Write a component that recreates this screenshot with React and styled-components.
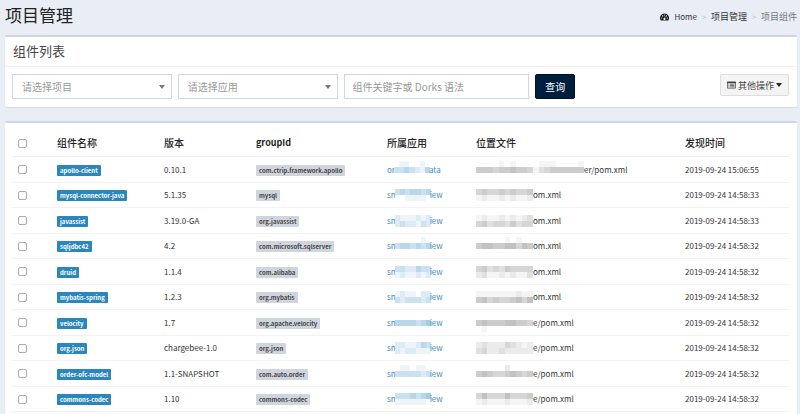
import React from "react";
import styled, { createGlobalStyle } from "styled-components";

const GlobalStyle = createGlobalStyle`
  * { box-sizing: border-box; }
  body {
    margin: 0;
    background: #e9eef6;
    color: #333;
    font-family: "Noto Sans CJK SC", "Noto Sans", sans-serif;
    font-size: 8px;
    line-height: 12px;
    overflow: hidden;
  }
  button, input, select { font-family: inherit; margin: 0; }
`;

const Page = styled.main`
  display: flex;
  flex-direction: column;
  padding: 0 3px 0 5px;
`;

const PageHeader = styled.header`
  display: flex;
  align-items: center;
  justify-content: space-between;
  height: 35px;
  padding-bottom: 6px;
`;

const PageTitle = styled.h1`
  margin: 0;
  font-size: 17px;
  line-height: 24px;
  font-weight: 400;
  color: #222;
`;

const Breadcrumb = styled.nav`
  display: flex;
  align-items: center;
  margin-top: 4px;
  font-size: 9px;
`;

const Crumb = styled.a`
  display: flex;
  align-items: center;
  gap: 5px;
  color: #333;
  text-decoration: none;
`;

const Latin = styled.span`
  font-size: 8px;
`;

const Separator = styled.span`
  width: 14px;
  text-align: center;
  font-size: 8px;
  color: #bcc1c9;
`;

const CurrentCrumb = styled.span`
  color: #777;
`;

const Card = styled.section`
  background: #fff;
  border-top: 2px solid #d0d4de;
  border-radius: 2px;
  box-shadow: 0 1px 1px rgba(0, 0, 0, 0.08);
  margin-bottom: 14px;
`;

const CardHeader = styled.div`
  height: 30px;
  padding: 5px 8px;
  border-bottom: 1px solid #f0f0f0;
`;

const CardTitle = styled.h2`
  margin: 0;
  font-size: 13px;
  line-height: 17px;
  font-weight: 400;
  color: #444;
`;

const Filters = styled.form`
  display: grid;
  grid-template-columns: 160fr 160fr 186fr auto 208fr;
  column-gap: 6px;
  align-items: start;
  padding: 7px 8px 8px 7px;
`;

const SelectWrap = styled.div`
  display: grid;
  align-items: center;
  > * { grid-area: 1 / 1; }
  > svg { justify-self: end; margin-right: 7px; pointer-events: none; }
`;

const Select = styled.select`
  appearance: none;
  width: 100%;
  height: 25px;
  padding: 0 18px 0 9px;
  border: 1px solid #d0d6e2;
  border-radius: 0;
  background: #fff;
  color: #999;
  font-size: 10px;
`;

const TextInput = styled.input`
  width: 100%;
  min-width: 0;
  height: 25px;
  padding: 0 8px;
  border: 1px solid #d0d6e2;
  border-radius: 0;
  background: #fff;
  color: #444;
  font-size: 10px;
  &::placeholder { color: #999; opacity: 1; }
`;

const SearchButton = styled.button`
  height: 25px;
  padding: 0 9px;
  border: 1px solid #00112e;
  border-radius: 2px;
  background: #001f3f;
  color: #fff;
  font-size: 10px;
`;

const MoreButton = styled.button`
  display: flex;
  align-items: center;
  justify-self: end;
  gap: 2px;
  height: 22px;
  padding: 0 6px;
  border: 1px solid #ddd;
  border-radius: 2px;
  background: #f4f4f4;
  color: #444;
  font-size: 9px;
`;

const TableArea = styled.div`
  padding: 7px 8px 7px 7px;
`;

const Table = styled.table`
  width: 100%;
  table-layout: fixed;
  border-collapse: separate;
  border-spacing: 0;
`;

const Column = styled.col`
  width: ${(p) => p.$width}px;
`;

const HeadCell = styled.th`
  height: 27px;
  padding: 0 6px;
  border-bottom: 1px solid #f0f0f0;
  text-align: left;
  font-size: ${(p) => (p.$latin ? 9 : 10)}px;
  font-weight: ${(p) => (p.$latin ? 700 : 500)};
  color: #222;
`;

const Row = styled.tr`
  height: 25px;
  &:nth-child(odd) { height: 26px; }
`;

const Cell = styled.td`
  padding: 0 6px;
  border-bottom: 1px solid #f3f3f3;
  white-space: nowrap;
`;

const Checkbox = styled.input`
  appearance: none;
  display: block;
  width: 9px;
  height: 9px;
  border: 1px solid #aaa;
  border-radius: 2px;
  background: #fff;
  &:checked { background: #3c8dbc; }
`;

const Badge = styled.span`
  display: block;
  width: fit-content;
  height: 11px;
  margin-top: 1px;
  padding: 0 3px;
  border-radius: 1px;
  background: ${(p) => (p.$primary ? "#2b87bb" : "#d0d4de")};
  color: ${(p) => (p.$primary ? "#fff" : "#444")};
  font-size: 6px;
  line-height: 11px;
  font-weight: 700;
`;

const AppLink = styled.a`
  display: flex;
  align-items: center;
  color: #3c8dbc;
  text-decoration: none;
  > svg { margin: 0 -1px; }
`;

const FilePath = styled.span`
  display: flex;
  align-items: center;
`;

const Mosaic = styled.svg`
  flex: none;
`;

/* Each digit is the darkness of one square, 0 being clear. */
function Redaction({ rows, width, color }) {
  const count = rows[0].length;
  return (
    <Mosaic
      width={width}
      height={rows.length * 6}
      viewBox={`0 0 ${count} ${rows.length}`}
      preserveAspectRatio="none"
      shapeRendering="crispEdges"
      aria-hidden="true"
    >
      <rect width={count} height={rows.length} fill="#fff" />
      {rows.flatMap((row, y) =>
        [...row].map((d, x) => (
          <rect key={`${x}-${y}`} x={x} y={y} width="1" height="1" fill={color} fillOpacity={Number(d) / 10} />
        ))
      )}
    </Mosaic>
  );
}

const Arrow = ({ color }) => (
  <svg width="6" height="4" viewBox="0 0 6 4" aria-hidden="true">
    <path d="M0 0h6L3 4z" fill={color} />
  </svg>
);

const DashboardIcon = () => (
  <svg width="9" height="8" viewBox="0 0 18 16" aria-hidden="true">
    <path d="M9 1a9 9 0 0 0-7.6 13.8c.2.3.4.4.8.4h13.6c.4 0 .6-.1.8-.4A9 9 0 0 0 9 1z" fill="#222" />
    <g fill="#e9eef6">
      <circle cx="3.5" cy="10" r="1.2" />
      <circle cx="5.2" cy="5.8" r="1.2" />
      <circle cx="9" cy="4" r="1.2" />
      <circle cx="12.8" cy="5.8" r="1.2" />
      <circle cx="14.5" cy="10" r="1.2" />
      <path d="M10 6.3l1 .3-.9 3.6a2.1 2.1 0 1 1-1-.3z" />
    </g>
  </svg>
);

const ListIcon = () => (
  <svg width="9" height="8" viewBox="0 0 18 16" aria-hidden="true">
    <path
      fill="#444"
      fillRule="evenodd"
      d="M1.5 1h15A1.5 1.5 0 0 1 18 2.500v11a1.500 1.500 0 0 1-1.500 1.500h-15A1.500 1.500 0 0 1 0 13.500v-11A1.500 1.500 0 0 1 1.500 1zM1.400 4.500v9h15.200v-9z"
    />
    <path fill="#444" d="M3 5.500h1.500v1.500H3zM6 5.500h9v1.500H6zM3 8.300h1.500v1.500H3zM6 8.300h9v1.500H6zM3 11h1.500v1.500H3zM6 11h9v1.500H6z" />
  </svg>
);

const columns = [
  { width: 39 },
  { width: 107, label: "组件名称" },
  { width: 92, label: "版本" },
  { width: 131, label: "groupId", latin: true },
  { width: 89, label: "所属应用" },
  { width: 209, label: "位置文件" },
  { width: 110, label: "发现时间" },
];

const components = [
  { name: "apollo-client", version: "0.10.1", group: "com.ctrip.framework.apollo", app: ["or", "ata"], appMask: ["0110010", "3343214", "0000000"], tail: "er/pom.xml", fileMask: ["0000101000011100001", "5554556554134555555", "0000000000000000000"], time: "2019-09-24 15:06:55" },
  { name: "mysql-connector-java", version: "5.1.35", group: "mysql", app: ["sn", "iew"], appMask: ["3434434", "0011110"], tail: "om.xml", fileMask: ["4544545445", "1211212112"], time: "2019-09-24 14:58:33" },
  { name: "javassist", version: "3.19.0-GA", group: "org.javassist", app: ["sn", "iew"], appMask: ["2111212", "2322132"], tail: "om.xml", fileMask: ["1211212123", "4534435344"], time: "2019-09-24 14:58:33" },
  { name: "sqljdbc42", version: "4.2", group: "com.microsoft.sqlserver", app: ["sn", "iew"], appMask: ["0000010", "3443434", "0000000"], tail: "om.xml", fileMask: ["0000010100", "5665566465", "0000000000"], time: "2019-09-24 14:58:32" },
  { name: "druid", version: "1.1.4", group: "com.alibaba", app: ["sn", "iew"], appMask: ["3322433", "1211212"], tail: "om.xml", fileMask: ["4534354444", "2311212113"], time: "2019-09-24 14:58:32" },
  { name: "mybatis-spring", version: "1.2.3", group: "org.mybatis", app: ["sn", "iew"], appMask: ["1211022", "3233323"], tail: "om.xml", fileMask: ["1111111211", "5645445646"], time: "2019-09-24 14:58:32" },
  { name: "velocity", version: "1.7", group: "org.apache.velocity", app: ["sn", "iew"], appMask: ["0000000", "4444345", "0000000"], tail: "e/pom.xml", fileMask: ["0000000000", "5655566554", "0100000000"], time: "2019-09-24 14:58:32" },
  { name: "org.json", version: "chargebee-1.0", group: "org.json", app: ["sn", "iew"], appMask: ["2211243", "2122111"], tail: "e/pom.xml", fileMask: ["2322243212", "3422322222"], time: "2019-09-24 14:58:32" },
  { name: "order-ofc-model", version: "1.1-SNAPSHOT", group: "com.auto.order", app: ["sn", "iew"], appMask: ["0110110", "3333323", "0000000"], tail: "e/pom.xml", fileMask: ["0000020000", "5654456545", "0000000000"], time: "2019-09-24 14:58:32" },
  { name: "commons-codec", version: "1.10", group: "commons-codec", app: ["sn", "iew"], appMask: ["3334345", "1111110"], tail: "e/pom.xml", fileMask: ["4644464445", "1211121112"], time: "2019-09-24 14:58:32" },
];

export default function App() {
  return (
    <>
      <GlobalStyle />
      <Page>
        <PageHeader>
          <PageTitle>项目管理</PageTitle>
          <Breadcrumb aria-label="breadcrumb">
            <Crumb href="#home"><DashboardIcon /><Latin>Home</Latin></Crumb>
            <Separator>&gt;</Separator>
            <Crumb href="#projects">项目管理</Crumb>
            <Separator>&gt;</Separator>
            <CurrentCrumb>项目组件</CurrentCrumb>
          </Breadcrumb>
        </PageHeader>

        <Card>
          <CardHeader><CardTitle>组件列表</CardTitle></CardHeader>
          <Filters onSubmit={(e) => e.preventDefault()}>
            <SelectWrap>
              <Select aria-label="项目"><option>请选择项目</option></Select>
              <Arrow color="#777" />
            </SelectWrap>
            <SelectWrap>
              <Select aria-label="应用"><option>请选择应用</option></Select>
              <Arrow color="#777" />
            </SelectWrap>
            <TextInput type="text" aria-label="关键字" placeholder="组件关键字或 Dorks 语法" />
            <SearchButton type="submit">查询</SearchButton>
            <MoreButton type="button"><ListIcon />其他操作<Arrow color="#222" /></MoreButton>
          </Filters>
        </Card>

        <Card>
          <TableArea>
            <Table>
              <colgroup>
                {columns.map((c) => <Column key={c.width} $width={c.width} />)}
              </colgroup>
              <thead>
                <tr>
                  {columns.map((c) => (
                    <HeadCell key={c.width} $latin={c.latin} scope="col">
                      {c.label || <Checkbox type="checkbox" aria-label="全选" />}
                    </HeadCell>
                  ))}
                </tr>
              </thead>
              <tbody>
                {components.map((c) => (
                  <Row key={c.name}>
                    <Cell><Checkbox type="checkbox" aria-label={c.name} /></Cell>
                    <Cell><Badge $primary>{c.name}</Badge></Cell>
                    <Cell>{c.version}</Cell>
                    <Cell><Badge>{c.group}</Badge></Cell>
                    <Cell>
                      <AppLink href="#app">
                        {c.app[0]}
                        <Redaction rows={c.appMask} width={36} color="#4f9bcb" />
                        {c.app[1]}
                      </AppLink>
                    </Cell>
                    <Cell>
                      <FilePath>
                        <Redaction rows={c.fileMask} width={c.fileMask[0].length > 10 ? 108 : 57} color="#999" />
                        {c.tail}
                      </FilePath>
                    </Cell>
                    <Cell>{c.time}</Cell>
                  </Row>
                ))}
              </tbody>
            </Table>
          </TableArea>
        </Card>
      </Page>
    </>
  );
}
